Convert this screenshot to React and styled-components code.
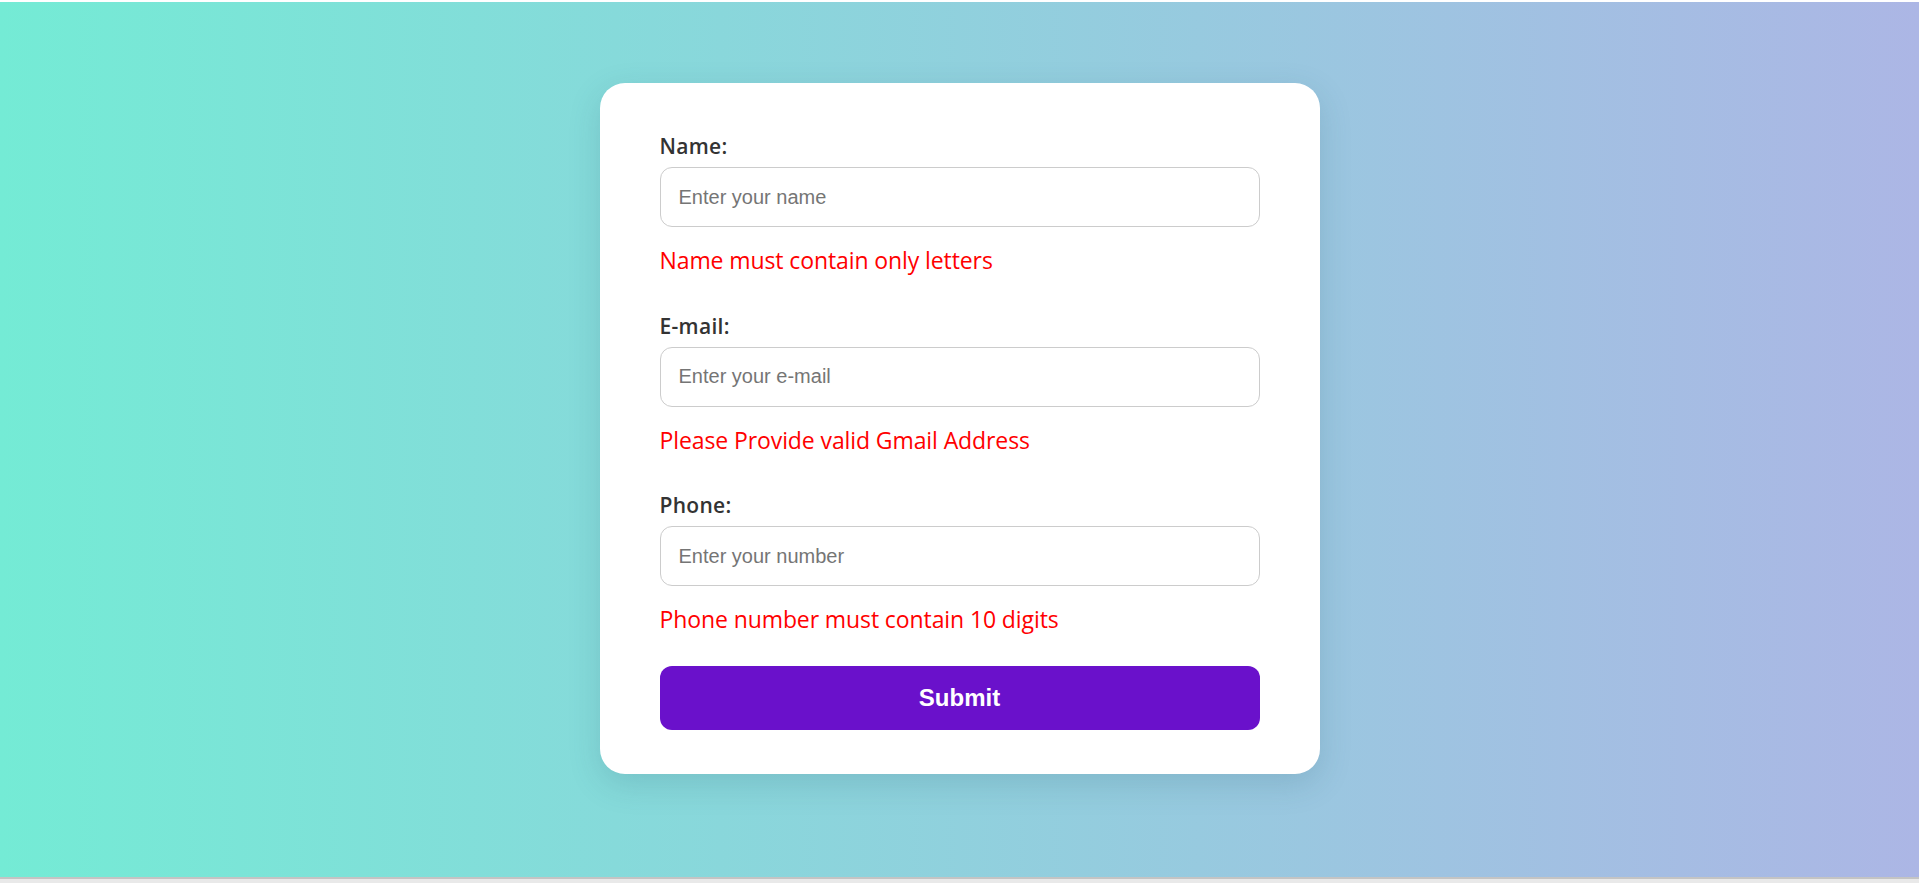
import React from "react";
import styled, { createGlobalStyle } from "styled-components";

const GlobalStyle = createGlobalStyle`
  html, body {
    margin: 0;
    padding: 0;
  }
  body {
    background: #e9e9e9;
    border-top: 2px solid #ffffff;
    font-family: "Open Sans", "Noto Sans", sans-serif;
  }
`;

const Page = styled.div`
  height: 877px;
  box-sizing: border-box;
  border-bottom: 2px solid #c4c4c4;
  background: linear-gradient(90deg, #74ebd5 0%, #acb6e5 100%);
  display: flex;
  flex-direction: column;
  align-items: center;
  padding-top: 81px;
`;

const Card = styled.form`
  width: 720px;
  box-sizing: border-box;
  background: #ffffff;
  border-radius: 25px;
  padding: 51px 60px 44px;
  box-shadow: 0 10px 32px rgba(40, 90, 110, 0.18);
  display: flex;
  flex-direction: column;
`;

const Field = styled.div`
  display: flex;
  flex-direction: column;
  & + & {
    margin-top: 39.6px;
  }
`;

const Label = styled.label`
  font-family: "Open Sans", "Noto Sans", sans-serif;
  font-size: 21px;
  line-height: 24px;
  font-weight: 600;
  color: #333333;
  margin-bottom: 9px;
  letter-spacing: 0.3px;
`;

const Input = styled.input`
  height: 60px;
  box-sizing: border-box;
  border: 1px solid #cccccc;
  border-radius: 12px;
  padding: 0 18px;
  font-family: "Liberation Sans", Arial, sans-serif;
  font-size: 20px;
  color: #222;
  background: #ffffff;
  outline: none;
  &::placeholder {
    color: #757575;
  }
`;

const ErrorText = styled.p`
  margin: 19px 0 0;
  font-family: "Open Sans", "Noto Sans", sans-serif;
  font-size: 23px;
  line-height: 28px;
  color: #ff0000;
  letter-spacing: -0.1px;
`;

const SubmitButton = styled.button`
  margin-top: 33px;
  height: 64px;
  border: none;
  border-radius: 12px;
  background: #6a11cb;
  color: #ffffff;
  font-family: "Liberation Sans", Arial, sans-serif;
  font-weight: 700;
  font-size: 24px;
  cursor: pointer;
`;

const fields = [
  { id: "name", label: "Name:", placeholder: "Enter your name", error: "Name must contain only letters" },
  { id: "email", label: "E-mail:", placeholder: "Enter your e-mail", error: "Please Provide valid Gmail Address" },
  { id: "phone", label: "Phone:", placeholder: "Enter your number", error: "Phone number must contain 10 digits" },
];

export default function App() {
  return (
    <>
      <GlobalStyle />
      <Page>
        <Card onSubmit={(e) => e.preventDefault()}>
          {fields.map((f) => (
            <Field key={f.id}>
              <Label htmlFor={f.id}>{f.label}</Label>
              <Input id={f.id} type="text" placeholder={f.placeholder} />
              <ErrorText>{f.error}</ErrorText>
            </Field>
          ))}
          <SubmitButton type="submit">Submit</SubmitButton>
        </Card>
      </Page>
    </>
  );
}
